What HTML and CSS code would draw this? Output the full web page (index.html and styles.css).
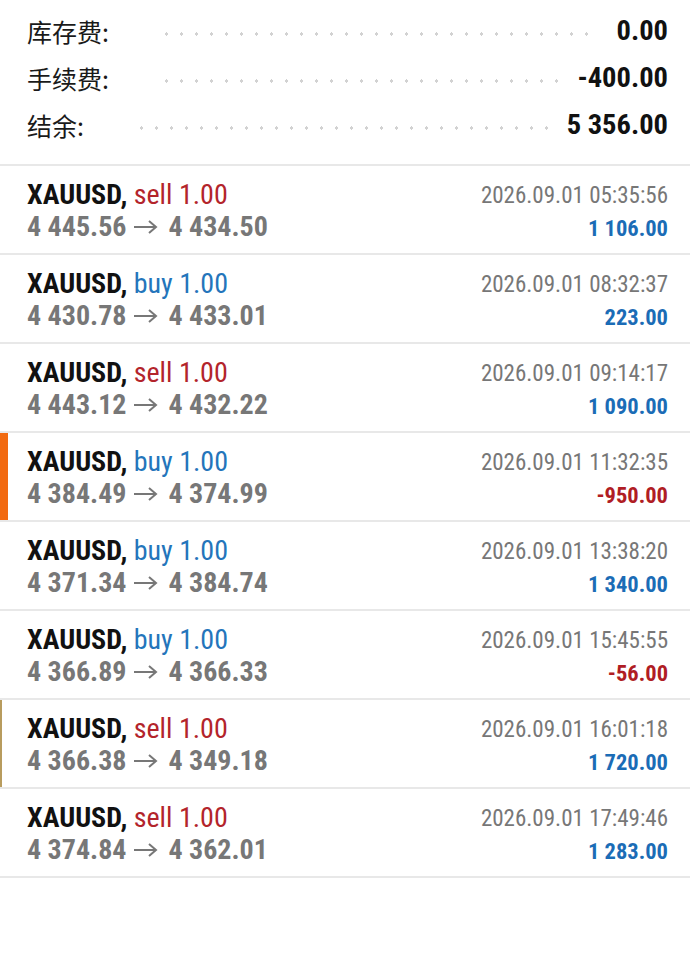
FILE: index.html
```html
<!DOCTYPE html>
<html lang="zh-CN">
<head>
    <meta charset="UTF-8">
    <meta name="viewport" content="width=device-width, initial-scale=1.0">
    <title>历史</title>
    <link rel="stylesheet" href="styles.css">
</head>
<body>
    <section class="summary">
        <div class="summary-row">
            <span class="summary-label">库存费:</span>
            <span class="leader"></span>
            <span class="summary-value">0.00</span>
        </div>
        <div class="summary-row">
            <span class="summary-label">手续费:</span>
            <span class="leader"></span>
            <span class="summary-value">-400.00</span>
        </div>
        <div class="summary-row">
            <span class="summary-label">结余:</span>
            <span class="leader"></span>
            <span class="summary-value">5 356.00</span>
        </div>
    </section>

    <ul class="deals">
        <li class="deal">
            <div class="deal-main">
                <div class="deal-title">XAUUSD, <span class="sell">sell 1.00</span></div>
                <div class="deal-prices">4 445.56 <svg class="arrow" viewBox="0 0 24 14"><path d="M0 7h22M15 1l7 6-7 6"/></svg> 4 434.50</div>
            </div>
            <div class="deal-side">
                <div class="deal-time">2026.09.01 05:35:56</div>
                <div class="deal-profit">1 106.00</div>
            </div>
        </li>
        <li class="deal">
            <div class="deal-main">
                <div class="deal-title">XAUUSD, <span class="buy">buy 1.00</span></div>
                <div class="deal-prices">4 430.78 <svg class="arrow" viewBox="0 0 24 14"><path d="M0 7h22M15 1l7 6-7 6"/></svg> 4 433.01</div>
            </div>
            <div class="deal-side">
                <div class="deal-time">2026.09.01 08:32:37</div>
                <div class="deal-profit">223.00</div>
            </div>
        </li>
        <li class="deal">
            <div class="deal-main">
                <div class="deal-title">XAUUSD, <span class="sell">sell 1.00</span></div>
                <div class="deal-prices">4 443.12 <svg class="arrow" viewBox="0 0 24 14"><path d="M0 7h22M15 1l7 6-7 6"/></svg> 4 432.22</div>
            </div>
            <div class="deal-side">
                <div class="deal-time">2026.09.01 09:14:17</div>
                <div class="deal-profit">1 090.00</div>
            </div>
        </li>
        <li class="deal marked">
            <div class="deal-main">
                <div class="deal-title">XAUUSD, <span class="buy">buy 1.00</span></div>
                <div class="deal-prices">4 384.49 <svg class="arrow" viewBox="0 0 24 14"><path d="M0 7h22M15 1l7 6-7 6"/></svg> 4 374.99</div>
            </div>
            <div class="deal-side">
                <div class="deal-time">2026.09.01 11:32:35</div>
                <div class="deal-profit loss">-950.00</div>
            </div>
        </li>
        <li class="deal">
            <div class="deal-main">
                <div class="deal-title">XAUUSD, <span class="buy">buy 1.00</span></div>
                <div class="deal-prices">4 371.34 <svg class="arrow" viewBox="0 0 24 14"><path d="M0 7h22M15 1l7 6-7 6"/></svg> 4 384.74</div>
            </div>
            <div class="deal-side">
                <div class="deal-time">2026.09.01 13:38:20</div>
                <div class="deal-profit">1 340.00</div>
            </div>
        </li>
        <li class="deal">
            <div class="deal-main">
                <div class="deal-title">XAUUSD, <span class="buy">buy 1.00</span></div>
                <div class="deal-prices">4 366.89 <svg class="arrow" viewBox="0 0 24 14"><path d="M0 7h22M15 1l7 6-7 6"/></svg> 4 366.33</div>
            </div>
            <div class="deal-side">
                <div class="deal-time">2026.09.01 15:45:55</div>
                <div class="deal-profit loss">-56.00</div>
            </div>
        </li>
        <li class="deal edged">
            <div class="deal-main">
                <div class="deal-title">XAUUSD, <span class="sell">sell 1.00</span></div>
                <div class="deal-prices">4 366.38 <svg class="arrow" viewBox="0 0 24 14"><path d="M0 7h22M15 1l7 6-7 6"/></svg> 4 349.18</div>
            </div>
            <div class="deal-side">
                <div class="deal-time">2026.09.01 16:01:18</div>
                <div class="deal-profit">1 720.00</div>
            </div>
        </li>
        <li class="deal">
            <div class="deal-main">
                <div class="deal-title">XAUUSD, <span class="sell">sell 1.00</span></div>
                <div class="deal-prices">4 374.84 <svg class="arrow" viewBox="0 0 24 14"><path d="M0 7h22M15 1l7 6-7 6"/></svg> 4 362.01</div>
            </div>
            <div class="deal-side">
                <div class="deal-time">2026.09.01 17:49:46</div>
                <div class="deal-profit">1 283.00</div>
            </div>
        </li>
    </ul>
</body>
</html>
```

FILE: styles.css
```css
:root {
    --text-color: #111;
    --grey-color: #777;
    --border-color: #e8e8e8;
    --sell-color: #b3242b;
    --buy-color: #2475bb;
    --profit-color: #1b6cb6;
    --loss-color: #b01d24;
    --mark-color: #f26a10;
}

body {
    font-family: "Roboto Condensed", "Liberation Sans Narrow", "DejaVu Sans Condensed", Roboto, "Noto Sans CJK SC", sans-serif;
    color: var(--text-color);
    background-color: #ffffff;
    margin: 0;
    padding: 0;
}

/* Summary block */
.summary {
    padding: 7px 22px 16px 27px;
    border-bottom: 2px solid var(--border-color);
}

.summary-row {
    display: flex;
    align-items: center;
    height: 47px;
}

.summary-label {
    font-family: "Noto Sans CJK SC", sans-serif;
    font-size: 25px;
    color: #1a1a1a;
}

.leader {
    flex-grow: 1;
    height: 4px;
    margin: 6px 18px 0 50px;
    background-image: radial-gradient(circle, #d2d2d2 1.5px, transparent 1.8px);
    background-size: 15px 4px;
}

.summary-value {
    font-size: 28.5px;
    font-weight: 700;
}

/* Deals list */
.deals {
    list-style: none;
    margin: 0;
    padding: 0;
}

.deal {
    display: flex;
    justify-content: space-between;
    height: 89px;
    box-sizing: border-box;
    padding: 13px 22px 0 27px;
    border-bottom: 2px solid var(--border-color);
}

.deal.marked {
    box-shadow: inset 8px 0 0 var(--mark-color);
}

.deal.edged {
    box-shadow: inset 2px 0 0 #b89c5e;
}

.deal-title,
.deal-prices {
    font-size: 28px;
    line-height: 32px;
}

.deal-title {
    font-weight: 700;
}

.sell,
.buy {
    font-weight: 400;
}

.sell {
    color: var(--sell-color);
}

.buy {
    color: var(--buy-color);
}

.deal-prices {
    font-weight: 700;
    color: var(--grey-color);
}

.arrow {
    width: 24px;
    height: 14px;
    margin: 0 4px 0 1px;
    vertical-align: 2px;
    fill: none;
    stroke: var(--grey-color);
    stroke-width: 2;
}

.deal-side {
    text-align: right;
    padding-top: 1px;
}

.deal-time {
    font-size: 23px;
    line-height: 32px;
    color: var(--grey-color);
}

.deal-profit {
    font-size: 22.5px;
    line-height: 32px;
    font-weight: 700;
    color: var(--profit-color);
}

.deal-profit.loss {
    color: var(--loss-color);
}
```
